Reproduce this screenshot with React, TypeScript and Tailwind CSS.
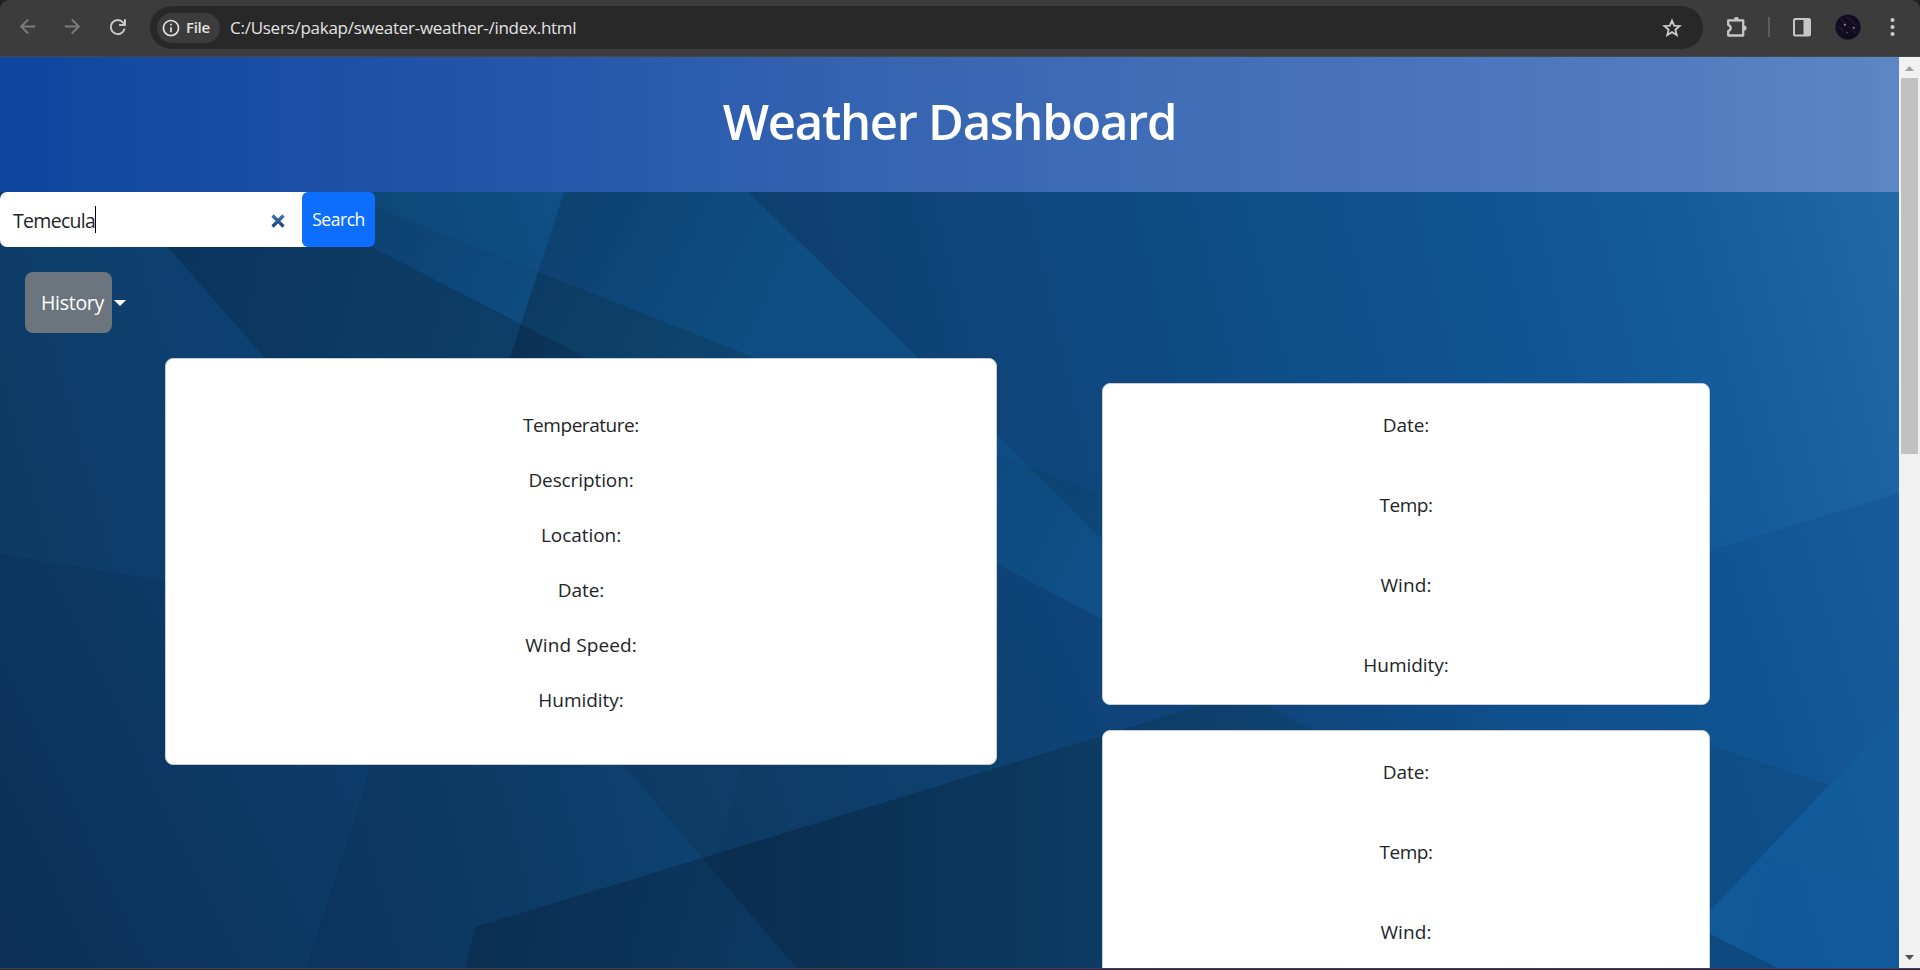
import React from "react";
import { MdArrowBack, MdArrowForward, MdOutlineInfo } from "react-icons/md";

const currentFields = [
  { label: "Temperature:", spacing: "tracking-[-0.45px]" },
  { label: "Description:", spacing: "tracking-[-0.1px]" },
  { label: "Location:", spacing: "tracking-[-0.05px]" },
  { label: "Date:", spacing: "tracking-[-0.05px]" },
  { label: "Wind Speed:", spacing: "tracking-[0.1px]" },
  { label: "Humidity:", spacing: "tracking-[-0.05px]" },
];

const forecastFields = [
  { label: "Date:", spacing: "tracking-[-0.05px]" },
  { label: "Temp:", spacing: "tracking-[-0.5px]" },
  { label: "Wind:", spacing: "tracking-[0.1px]" },
  { label: "Humidity:", spacing: "tracking-[-0.05px]" },
];

function ReloadIcon() {
  return (
    <svg width="20" height="20" viewBox="0 0 20 20" fill="none" stroke="#c7c7c7" strokeWidth="2">
      <path d="M16.6 11.6A7 7 0 1 1 15 5.4l1.6 1.7" />
      <path d="M17 2.2v5.9h-5.9" />
    </svg>
  );
}

function StarIcon() {
  return (
    <svg width="24" height="24" viewBox="0 0 24 24" fill="none" stroke="#c7c7c7" strokeWidth="1.9" strokeLinejoin="miter">
      <path d="M12 4.6l2.1 5 5.5.5-4.2 3.6 1.3 5.3-4.7-2.8L7.3 19l1.3-5.3-4.2-3.6 5.5-.5z" />
    </svg>
  );
}

function PuzzleIcon() {
  return (
    <svg width="24" height="24" viewBox="0 0 24 24" fill="none" stroke="#c7c7c7" strokeWidth="2.3" strokeLinejoin="round">
      <path d="M4 5.3h14.2v15.2H3.2v-4.3c1.6-.6 2.5-1.7 2.5-3.2s-.9-2.6-2.5-3.2V5.3z" />
      <path d="M8.8 4.6a2.6 2.6 0 0 1 5.2 0zM19 10.4a2.6 2.6 0 0 1 0 5.2z" fill="#c7c7c7" stroke="none" />
    </svg>
  );
}

function SidePanelIcon() {
  return (
    <svg width="20" height="20" viewBox="0 0 20 20">
      <rect x="2" y="2" width="16" height="16.4" rx="1.2" fill="none" stroke="#c7c7c7" strokeWidth="2" />
      <rect x="11.5" y="2" width="6.5" height="16.4" fill="#c7c7c7" />
    </svg>
  );
}

function Avatar() {
  return (
    <svg width="26" height="26" viewBox="0 0 26 26">
      <circle cx="13" cy="13" r="12.6" fill="#110d20" />
      <path d="M5 5l7 6M12 3l10 9M3 12l6 6M13 12l8 7" stroke="#211a38" strokeWidth="1.2" />
      <path d="M9 10l1.6 1.6M18 13l1.6 1.6" stroke="#a99bb8" strokeWidth="1.2" />
      <circle cx="12" cy="18.5" r="0.7" fill="#6d6288" />
    </svg>
  );
}

function Toolbar() {
  return (
    <div className="h-[57px] w-full bg-[#1f2020]">
      <div className="flex h-full items-start rounded-t-[9px] border-b border-[#474747] bg-[#3c3c3c] pl-[5px]">
        <div className="mt-[4px] flex h-[45px] w-[135px] items-center text-[#7c7c7c]">
          <span className="flex w-[45px] justify-center"><MdArrowBack size={23} /></span>
          <span className="flex w-[45px] justify-center"><MdArrowForward size={23} /></span>
          <span className="flex w-[45px] justify-center"><ReloadIcon /></span>
        </div>
        <div className="mt-[6px] ml-[10px] flex h-[43px] w-[1553px] items-center rounded-full bg-[#282828] pr-[19px] pl-[7px]">
          <div className="flex h-[30px] w-[63px] items-center rounded-full bg-[#3c3c3c] pl-[4px] text-[#e3e3e3]">
            <MdOutlineInfo size={20} />
            <span className="ml-[5px] text-[15px] leading-[29px] font-semibold tracking-[-0.3px]">File</span>
          </div>
          <span className="ml-[10px] flex-1 text-[17px] leading-[30px] tracking-[-0.26px] text-[#e3e3e3]">
            C:/Users/pakap/sweater-weather-/index.html
          </span>
          <StarIcon />
        </div>
        <div className="mt-[4px] flex h-[45px] flex-1 items-center">
          <div className="ml-[22px]"><PuzzleIcon /></div>
          <div className="ml-[19px] h-[20px] w-[2px] bg-[#5d5d5d]" />
          <div className="ml-[22px]"><SidePanelIcon /></div>
          <div className="ml-[22.5px]"><Avatar /></div>
          <svg className="ml-[25px]" width="12" height="22" viewBox="0 0 12 22" fill="#c7c7c7">
            <circle cx="6.5" cy="4" r="2.1" />
            <circle cx="6.5" cy="11" r="2.1" />
            <circle cx="6.5" cy="18" r="2.1" />
          </svg>
        </div>
      </div>
    </div>
  );
}

type Facet = {
  id: string;
  points: string;
  axis: [number, number, number, number];
  stops: [number, string][];
};

const facets: Facet[] = [
  {
    id: "sky",
    points: "740,57 1899,57 1899,968 740,968",
    axis: [780, 330, 1880, 60],
    stops: [[0, "#0d3f6d"], [0.18, "#0f457a"], [0.42, "#0e4e87"], [0.65, "#105594"], [0.82, "#155d9d"], [1, "#2269a6"]],
  },
  { id: "west", points: "0,57 300,57 300,600 0,600", axis: [0, 400, 260, 330], stops: [[0, "#0d3b66"], [1, "#0d4173"]] },
  { id: "southwest", points: "0,554 165,581 480,633 480,968 0,968", axis: [0, 930, 390, 740], stops: [[0, "#0c3058"], [0.35, "#0b355f"], [1, "#0c3d6b"]] },
  { id: "south", points: "374,757 640,757 800,968 306,968", axis: [340, 900, 690, 810], stops: [[0, "#0b355f"], [0.5, "#0c3b66"], [1, "#0d4271"]] },
  { id: "wedge", points: "120,192 375,192 375,249 521,324 521,400 301,400", axis: [180, 250, 500, 330], stops: [[0, "#0b345d"], [0.6, "#0c3a63"], [1, "#0c3e67"]] },
  { id: "gusset", points: "521,324 670,400 496,400", axis: [510, 350, 620, 350], stops: [[0, "#0a3054"], [1, "#0c3b62"]] },
  { id: "fanA", points: "330,189 566,189 538,272", axis: [380, 250, 560, 190], stops: [[0, "#0e4777"], [1, "#0f4f85"]] },
  { id: "fanB", points: "374,207 538,272 521,324 374,248", axis: [376, 220, 520, 300], stops: [[0, "#0e4271"], [1, "#0e4b7f"]] },
  { id: "fanC", points: "565,189 745,189 1033,470 1028,466 538,272", axis: [555, 250, 760, 350], stops: [[0, "#0e4271"], [0.5, "#0e487a"], [1, "#0f4e83"]] },
  { id: "fanD", points: "538,272 1028,466 1102,539 1241,693 521,324", axis: [540, 290, 1080, 560], stops: [[0, "#0c3c63"], [0.35, "#0d4570"], [0.85, "#0e4b80"], [1, "#0f4e86"]] },
  { id: "sliver", points: "1028,466 1102,495 1180,525 1180,617 1102,539", axis: [1028, 466, 1102, 540], stops: [[0, "#0d436f"], [1, "#0d4679"]] },
  { id: "center", points: "617,757 990,560 1241,693 702,858", axis: [630, 830, 1080, 640], stops: [[0, "#0c3860"], [0.5, "#0d3f6c"], [0.8, "#0e4272"], [1, "#0f447a"]] },
  { id: "southeast", points: "1241,693 1899,493 1899,968 1778,968", axis: [1240, 760, 1899, 560], stops: [[0, "#0f4378"], [0.4, "#0f4f8b"], [0.75, "#105493"], [1, "#175b9a"]] },
  { id: "pitWest", points: "475,927 702,858 800,968 465,968", axis: [490, 900, 760, 970], stops: [[0, "#0a2f53"], [1, "#0b3760"]] },
  { id: "pit", points: "702,858 1241,693 1778,968 796,968", axis: [730, 890, 1730, 890], stops: [[0, "#0a2d50"], [0.25, "#0b365c"], [0.5, "#0d406d"], [1, "#0e4a80"]] },
];

function Backdrop() {
  return (
    <svg className="absolute inset-0" width="1899" height="911" viewBox="0 57 1899 911">
      <defs>
        {facets.map((facet) => (
          <linearGradient
            key={facet.id}
            id={facet.id}
            gradientUnits="userSpaceOnUse"
            x1={facet.axis[0]}
            y1={facet.axis[1]}
            x2={facet.axis[2]}
            y2={facet.axis[3]}
          >
            {facet.stops.map(([offset, color]) => (
              <stop key={offset} offset={offset} stopColor={color} />
            ))}
          </linearGradient>
        ))}
      </defs>
      <rect x="0" y="57" width="1899" height="911" fill="#0d3f6d" />
      {facets.map((facet) => (
        <polygon key={facet.id} points={facet.points} fill={`url(#${facet.id})`} />
      ))}
      <polygon points="624,765 742,767 718,853 702,858" fill="#14507c" fillOpacity="0.14" />
      <polygon points="722,852 715,876 695,968 800,968 702,858" fill="#0e4468" fillOpacity="0.12" />
      <polygon points="1710,745 1828,785 1710,911" fill="#0e4778" fillOpacity="0.4" />
      <polygon points="1899,712 1710,911 1710,934 1778,968 1899,968" fill="#1464a4" fillOpacity="0.4" />
      <polygon points="1768,860 1899,886 1899,968 1778,968 1742,950" fill="#10559a" fillOpacity="0.2" />
    </svg>
  );
}

function ForecastCard({ rows }: { rows: number }) {
  return (
    <section className="flex h-[322px] w-[608px] shrink-0 flex-col gap-[50px] rounded-[8px] border border-[#c8cdd4] bg-white pt-[26px] text-center">
      {forecastFields.slice(0, rows).map((field) => (
        <p key={field.label} className={`text-[19px] leading-[30px] ${field.spacing}`}>{field.label}</p>
      ))}
    </section>
  );
}

function Scrollbar() {
  return (
    <div className="flex h-full w-[21px] flex-col items-center bg-[#f1f1f1]">
      <svg width="21" height="21" viewBox="0 0 21 21"><path d="M6 14l4.5-5 4.5 5z" fill="#a3a3a3" /></svg>
      <div className="h-[376px] w-[17px] bg-[#c1c1c1]" />
      <svg className="mt-auto" width="21" height="21" viewBox="0 0 21 21"><path d="M6 8l4.5 5L15 8z" fill="#505050" /></svg>
    </div>
  );
}

export default function App() {
  return (
    <div className="flex h-[970px] w-[1920px] flex-col overflow-hidden bg-[#0b3058] font-['Open_Sans','Noto_Sans',sans-serif] text-[#212529]">
      <Toolbar />
      <div className="flex h-[911px]">
        <div className="relative h-[911px] w-[1899px] overflow-hidden">
          <Backdrop />
          <div className="relative flex flex-col">
            <header className="flex h-[135px] justify-center bg-[linear-gradient(90deg,#0f459f_0%,#2757aa_30%,#3463b1_45%,#4470b8_66%,#5079bf_85%,#5d86c4_100%)] pt-[34px]">
              <h1 className="text-[49px] leading-[60px] font-semibold tracking-[-1.3px] whitespace-nowrap text-white">Weather Dashboard</h1>
            </header>
            <div className="flex h-[55px]">
              <div className="flex w-[302px] items-center rounded-l-[7px] bg-white pr-[17px] pl-[13px]">
                <span className="mt-[2px] text-[19.5px] leading-[30px] tracking-[-0.7px]">Temecula</span>
                <span className="h-[27px] w-px bg-black" />
                <svg className="mt-[3px] ml-auto" width="14" height="14" viewBox="0 0 14 14">
                  <defs>
                    <linearGradient id="clear" gradientUnits="userSpaceOnUse" x1="0" y1="0" x2="0" y2="14">
                      <stop offset="0" stopColor="#3c78c4" />
                      <stop offset="1" stopColor="#203c70" />
                    </linearGradient>
                  </defs>
                  <path d="M1.5 1.5l11 11M12.5 1.5l-11 11" stroke="url(#clear)" strokeWidth="3.2" />
                </svg>
              </div>
              <div className="flex bg-[linear-gradient(90deg,#fff_50%,transparent_50%)]">
                <button className="h-[55px] w-[73px] rounded-[6px] bg-[#0d6efd] text-[17.5px] leading-[55px] tracking-[-0.45px] text-white">Search</button>
              </div>
            </div>
            <div className="mt-[25px] ml-[25px] flex h-[61px] items-center">
              <button className="h-[61px] w-[87px] rounded-[8px] bg-[#6c757d] pl-[8px] text-[19.5px] tracking-[-0.3px] text-white">History</button>
              <span className="ml-[2px] h-0 w-0 border-x-[6px] border-t-[6px] border-x-transparent border-t-white" />
            </div>
            <main className="mt-[25px] flex items-start pl-[165px]">
              <section className="flex h-[407px] w-[832px] flex-col gap-[25px] rounded-[8px] border border-[#c8cdd4] bg-white pt-[51px] text-center">
                {currentFields.map((field) => (
                  <p key={field.label} className={`text-[19px] leading-[30px] ${field.spacing}`}>{field.label}</p>
                ))}
              </section>
              <div className="mt-[25px] ml-[105px] flex flex-col gap-[25px]">
                <ForecastCard rows={4} />
                <ForecastCard rows={3} />
              </div>
            </main>
          </div>
        </div>
        <Scrollbar />
      </div>
      <div className="h-[2px] w-full border-t border-[#44474d] bg-[linear-gradient(90deg,#1c2226_0%,#20262b_35%,#2e1a4e_50%,#2a1848_100%)]" />
    </div>
  );
}
